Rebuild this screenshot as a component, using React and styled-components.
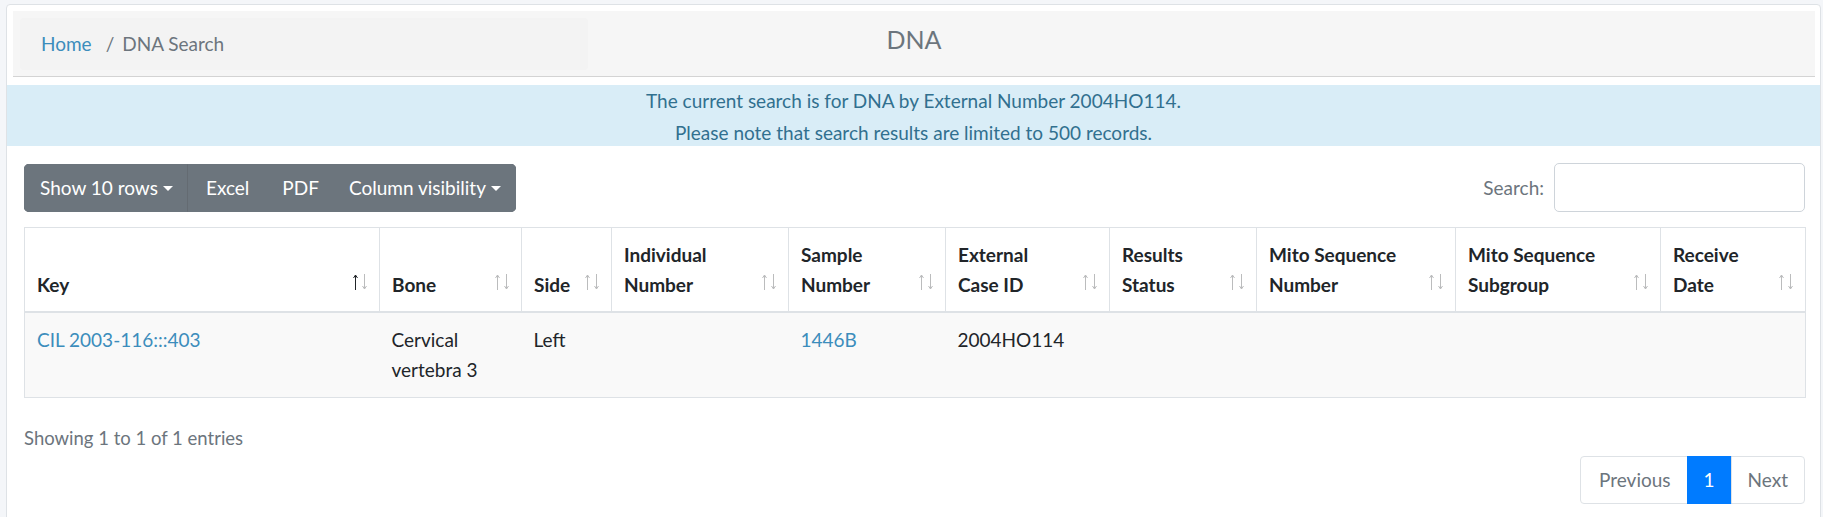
import React from 'react';
import styled, { createGlobalStyle } from 'styled-components';

const GlobalStyle = createGlobalStyle`
  html, body {
    margin: 0;
    padding: 0;
    background: #f4f6f9;
    font-family: Lato, "Open Sans", "Liberation Sans", sans-serif;
    font-size: 19px;
    line-height: 30px;
    color: #212529;
  }
  * { box-sizing: border-box; }
`;

const Card = styled.div`
  margin: 4px 2px 0 6px;
  background: #fff;
  border: 1px solid #dee2e6;
  border-radius: 4px;
  padding-bottom: 20px;
`;

// top bar: breadcrumb on the left, page title centered
const Header = styled.div`
  margin: 6px 5px 0 6px;
  padding: 7px 7px 6px;
  background: #f6f6f6;
  border-bottom: 1px solid #d4d4d4;
  display: grid;
  grid-template-columns: 568px 1fr 568px;
`;

const Crumbs = styled.div`
  background: #f3f3f3;
  border-radius: 4px;
  padding: 11px 21px;
  display: flex;
  align-items: center;
  color: #6c757d;
`;

const Link = styled.a`
  color: #3c8dbc;
  text-decoration: none;
`;

const Sep = styled.span`
  margin: 0 8px 0 14px;
`;

const Title = styled.h4`
  margin: 6px 0 0;
  font-size: 25px;
  line-height: 30px;
  font-weight: 400;
  color: #6c757d;
  text-align: center;
`;

const Alert = styled.div`
  margin-top: 8px;
  height: 61px;
  padding-top: 1px;
  background: #d9edf7;
  color: #31708f;
  text-align: center;
  display: flex;
  flex-direction: column;
  gap: 2px;
`;

const Body = styled.div`
  padding: 17px 15px 0 17px;
`;

const Toolbar = styled.div`
  display: flex;
  justify-content: space-between;
  align-items: center;
`;

const BtnGroup = styled.div`
  display: flex;
  border-radius: 5px;
  overflow: hidden;
  background: #6c757d;
`;

const Btn = styled.button`
  font: inherit;
  color: #fff;
  background: #6c757d;
  border: 1px solid #6c757d;
  padding: 8px ${(p) => p.$px || 14}px;
  line-height: 30px;
  display: flex;
  align-items: center;
  cursor: pointer;
  ${(p) => p.$split && 'padding-left: 15px; border-right-color: #646b72;'}
`;

const Caret = styled.span`
  margin-left: 5px;
  margin-top: 2px;
  width: 0;
  height: 0;
  border-top: 5px solid #fff;
  border-left: 5px solid transparent;
  border-right: 5px solid transparent;
`;

const SearchBox = styled.label`
  display: flex;
  align-items: center;
  gap: 10px;
  color: #6c757d;
`;

const Input = styled.input`
  width: 251px;
  height: 49px;
  border: 1px solid #ced4da;
  border-radius: 5px;
  font: inherit;
`;

const Table = styled.table`
  margin-top: 15px;
  width: 1781px;
  table-layout: fixed;
  border-collapse: collapse;
  border: 1px solid #dee2e6;
`;

const Th = styled.th`
  position: relative;
  text-align: left;
  vertical-align: bottom;
  font-weight: 700;
  padding: 12px 30px 11px 12px;
  border: 1px solid #dee2e6;
  border-bottom-width: 2px;
`;

const SortIcon = styled.svg`
  position: absolute;
  right: 12px;
  bottom: 21px;
`;

const Row = styled.tr`
  background: #f9f9f9;
`;

const Td = styled.td`
  vertical-align: top;
  padding: 12px;
  border-bottom: 1px solid #dee2e6;
`;

const Info = styled.div`
  margin-top: 25px;
  font-size: 18.5px;
  color: #6c757d;
`;

const Pager = styled.div`
  display: flex;
  justify-content: flex-end;
  margin-top: 3px;
`;

const Page = styled.a`
  padding: 8px 16px;
  line-height: 30px;
  text-decoration: none;
  border: 1px solid ${(p) => (p.$active ? '#007bff' : '#dee2e6')};
  background: ${(p) => (p.$active ? '#007bff' : '#fff')};
  color: ${(p) => (p.$active ? '#fff' : '#6c757d')};
  margin-left: -1px;
  &:first-child { border-radius: 4px 0 0 4px; padding-left: 18px; }
  &:last-child { border-radius: 0 4px 4px 0; }
`;

const Sort = ({ active }) => (
  <SortIcon width="14" height="16" viewBox="0 0 14 16">
    <g fill="none" stroke="#212529" strokeWidth="1">
      <g opacity={active ? 1 : 0.3}>
        <path d="M2.5 16V1" />
        <path d="M0.5 4L2.5 1L4.5 4" />
      </g>
      <g opacity="0.3">
        <path d="M11.5 0V15" />
        <path d="M9.5 12L11.5 15L13.5 12" />
      </g>
    </g>
  </SortIcon>
);

const columns = [
  { label: ['Key'], width: 355, active: true },
  { label: ['Bone'], width: 142 },
  { label: ['Side'], width: 90 },
  { label: ['Individual', 'Number'], width: 177 },
  { label: ['Sample', 'Number'], width: 157 },
  { label: ['External', 'Case ID'], width: 164 },
  { label: ['Results', 'Status'], width: 147 },
  { label: ['Mito Sequence', 'Number'], width: 199 },
  { label: ['Mito Sequence', 'Subgroup'], width: 205 },
  { label: ['Receive', 'Date'], width: 145 },
];

const App = () => {
  return (
    <>
      <GlobalStyle />
      <Card>
        <Header>
          <Crumbs>
            <Link href="#">Home</Link>
            <Sep>/</Sep>
            DNA Search
          </Crumbs>
          <Title>DNA</Title>
          <div />
        </Header>
        <Alert>
          <div>The current search is for DNA by External Number 2004HO114.</div>
          <div>Please note that search results are limited to 500 records.</div>
        </Alert>
        <Body>
          <Toolbar>
            <BtnGroup>
              <Btn $split>
                Show 10 rows<Caret />
              </Btn>
              <Btn $px={17}>Excel</Btn>
              <Btn $px={14}>PDF</Btn>
              <Btn $px={14}>
                Column visibility<Caret />
              </Btn>
            </BtnGroup>
            <SearchBox>
              Search:
              <Input type="search" />
            </SearchBox>
          </Toolbar>
          <Table>
            <colgroup>
              {columns.map((c, i) => (
                <col key={i} style={{ width: c.width }} />
              ))}
            </colgroup>
            <thead>
              <tr>
                {columns.map((c, i) => (
                  <Th key={i}>
                    {c.label.map((l, j) => (
                      <div key={j}>{l}</div>
                    ))}
                    <Sort active={c.active} />
                  </Th>
                ))}
              </tr>
            </thead>
            <tbody>
              <Row>
                <Td>
                  <Link href="#">CIL 2003-116:::403</Link>
                </Td>
                <Td>Cervical vertebra 3</Td>
                <Td>Left</Td>
                <Td></Td>
                <Td>
                  <Link href="#">1446B</Link>
                </Td>
                <Td>2004HO114</Td>
                <Td></Td>
                <Td></Td>
                <Td></Td>
                <Td></Td>
              </Row>
            </tbody>
          </Table>
          <Info>Showing 1 to 1 of 1 entries</Info>
          <Pager>
            <Page href="#">Previous</Page>
            <Page href="#" $active>1</Page>
            <Page href="#">Next</Page>
          </Pager>
        </Body>
      </Card>
    </>
  );
};

export default App;
